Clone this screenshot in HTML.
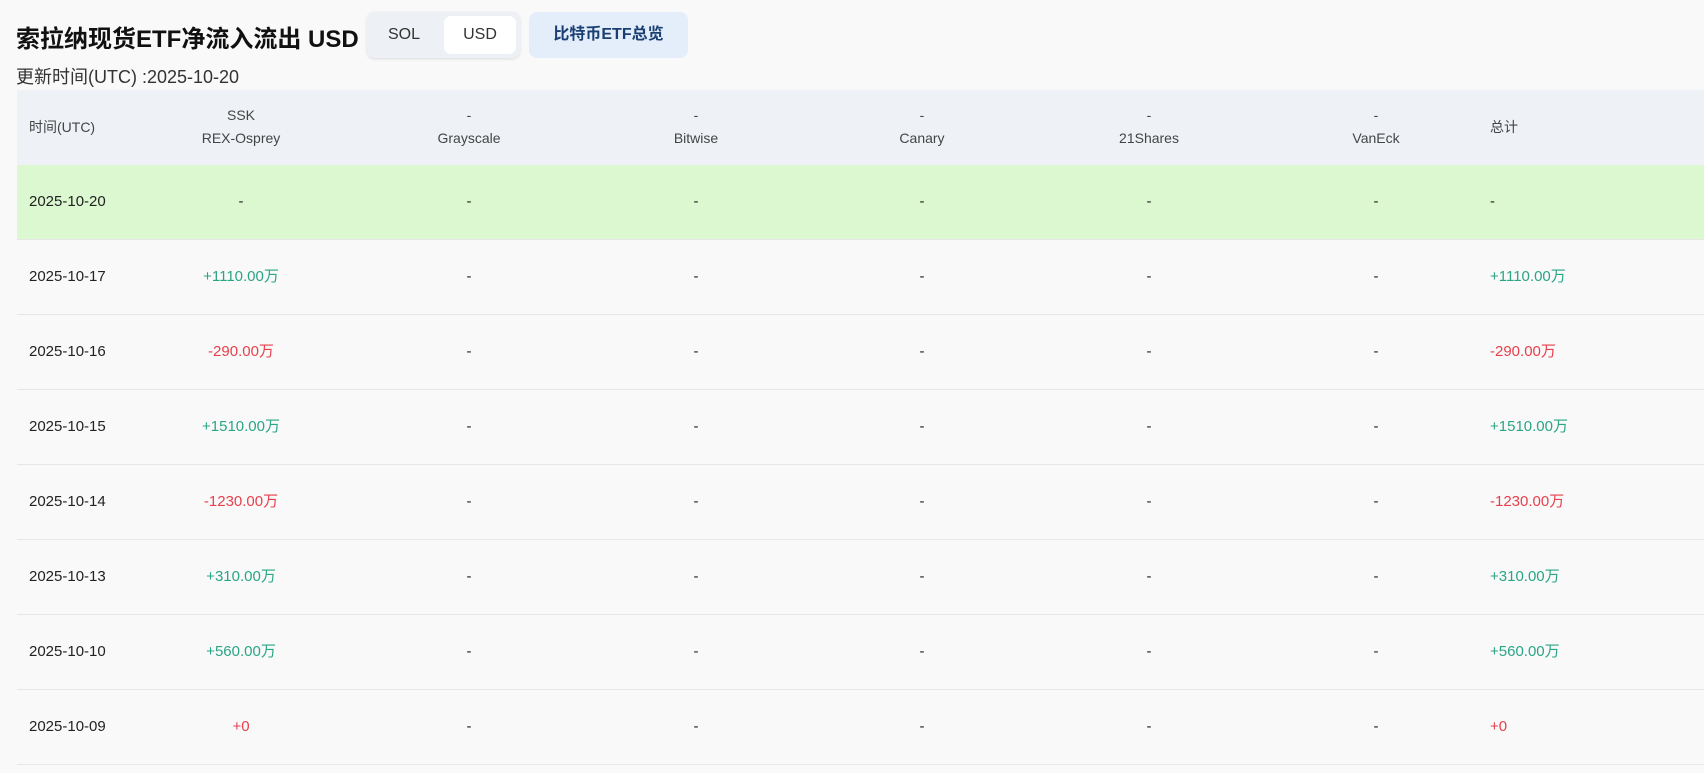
<!DOCTYPE html>
<html><head><meta charset="utf-8"><style>
body{margin:0;width:1704px;height:773px;background:#f9f9fa;font-family:"Liberation Sans","Noto Sans CJK SC",sans-serif;color:#222;overflow:hidden;position:relative}
.a{position:absolute}
.title{left:16px;top:22px;font-size:24px;font-weight:bold;color:#111;white-space:nowrap;line-height:36px}
.tog{left:367px;top:12px;width:153px;height:46px;background:#edf0f4;border-radius:8px;box-shadow:0 1px 3px rgba(0,0,0,.12)}
.tog span{position:absolute;top:4px;height:38px;line-height:38px;font-size:16px;color:#333;text-align:center}
.btn{left:529px;top:12px;width:159px;height:46px;background:#e3eefa;border-radius:8px;color:#1a3f72;font-weight:bold;font-size:16px;line-height:46px;text-align:center}
.sub{left:16px;top:63px;font-size:18px;color:#333}
.hdr{left:17px;top:90px;width:1687px;height:75px;background:#eef2f6}
.green{left:17px;top:165px;width:1687px;height:74px;background:#dcf8d0}
.line{left:17px;width:1687px;height:1px;background:#e6e6e6}
.c{position:absolute;transform:translateX(-50%);text-align:center;font-size:15px;white-space:nowrap;line-height:20px}
.l{position:absolute;font-size:15px;white-space:nowrap;line-height:20px}
.h{font-size:14px;color:#444;line-height:23px}
.g{color:#2aa584}.r{color:#e5404c}
</style></head><body>
<div class="a title">索拉纳现货ETF净流入流出 USD</div>
<div class="a tog"><span style="left:4px;width:66px">SOL</span><span style="left:77px;width:72px;background:#fff;border-radius:7px">USD</span></div>
<div class="a btn">比特币ETF总览</div>
<div class="a sub">更新时间(UTC) :2025-10-20</div>
<div class="a hdr"></div>
<div class="a green"></div>
<div id="t"></div>
<script>
var cols=[241,469,696,922,1149,1376];
var names=[["SSK","REX-Osprey"],["-","Grayscale"],["-","Bitwise"],["-","Canary"],["-","21Shares"],["-","VanEck"]];
var h='';
h+='<div class="l h" style="left:29px;top:116px">时间(UTC)</div>';
names.forEach(function(n,i){h+='<div class="c h" style="left:'+cols[i]+'px;top:104px">'+n[0]+'<br>'+n[1]+'</div>'});
h+='<div class="l h" style="left:1490px;top:116px">总计</div>';
var rows=[["2025-10-20","-",""],["2025-10-17","+1110.00万","g"],["2025-10-16","-290.00万","r"],["2025-10-15","+1510.00万","g"],["2025-10-14","-1230.00万","r"],["2025-10-13","+310.00万","g"],["2025-10-10","+560.00万","g"],["2025-10-09","+0","r"]];
rows.forEach(function(r,i){var y=165+i*75;var ty=y+27;
if(i>0)h+='<div class="a line" style="top:'+(y-1)+'px"></div>';
h+='<div class="l" style="left:29px;top:'+ty+'px">'+r[0]+'</div>';
h+='<div class="c '+r[2]+'" style="left:241px;top:'+ty+'px">'+r[1]+'</div>';
for(var k=1;k<6;k++)h+='<div class="c" style="left:'+cols[k]+'px;top:'+ty+'px">-</div>';
h+='<div class="l '+r[2]+'" style="left:1490px;top:'+ty+'px">'+r[1]+'</div>';});
h+='<div class="a line" style="top:764px"></div>';
document.getElementById('t').innerHTML=h;
</script>
</body></html>
